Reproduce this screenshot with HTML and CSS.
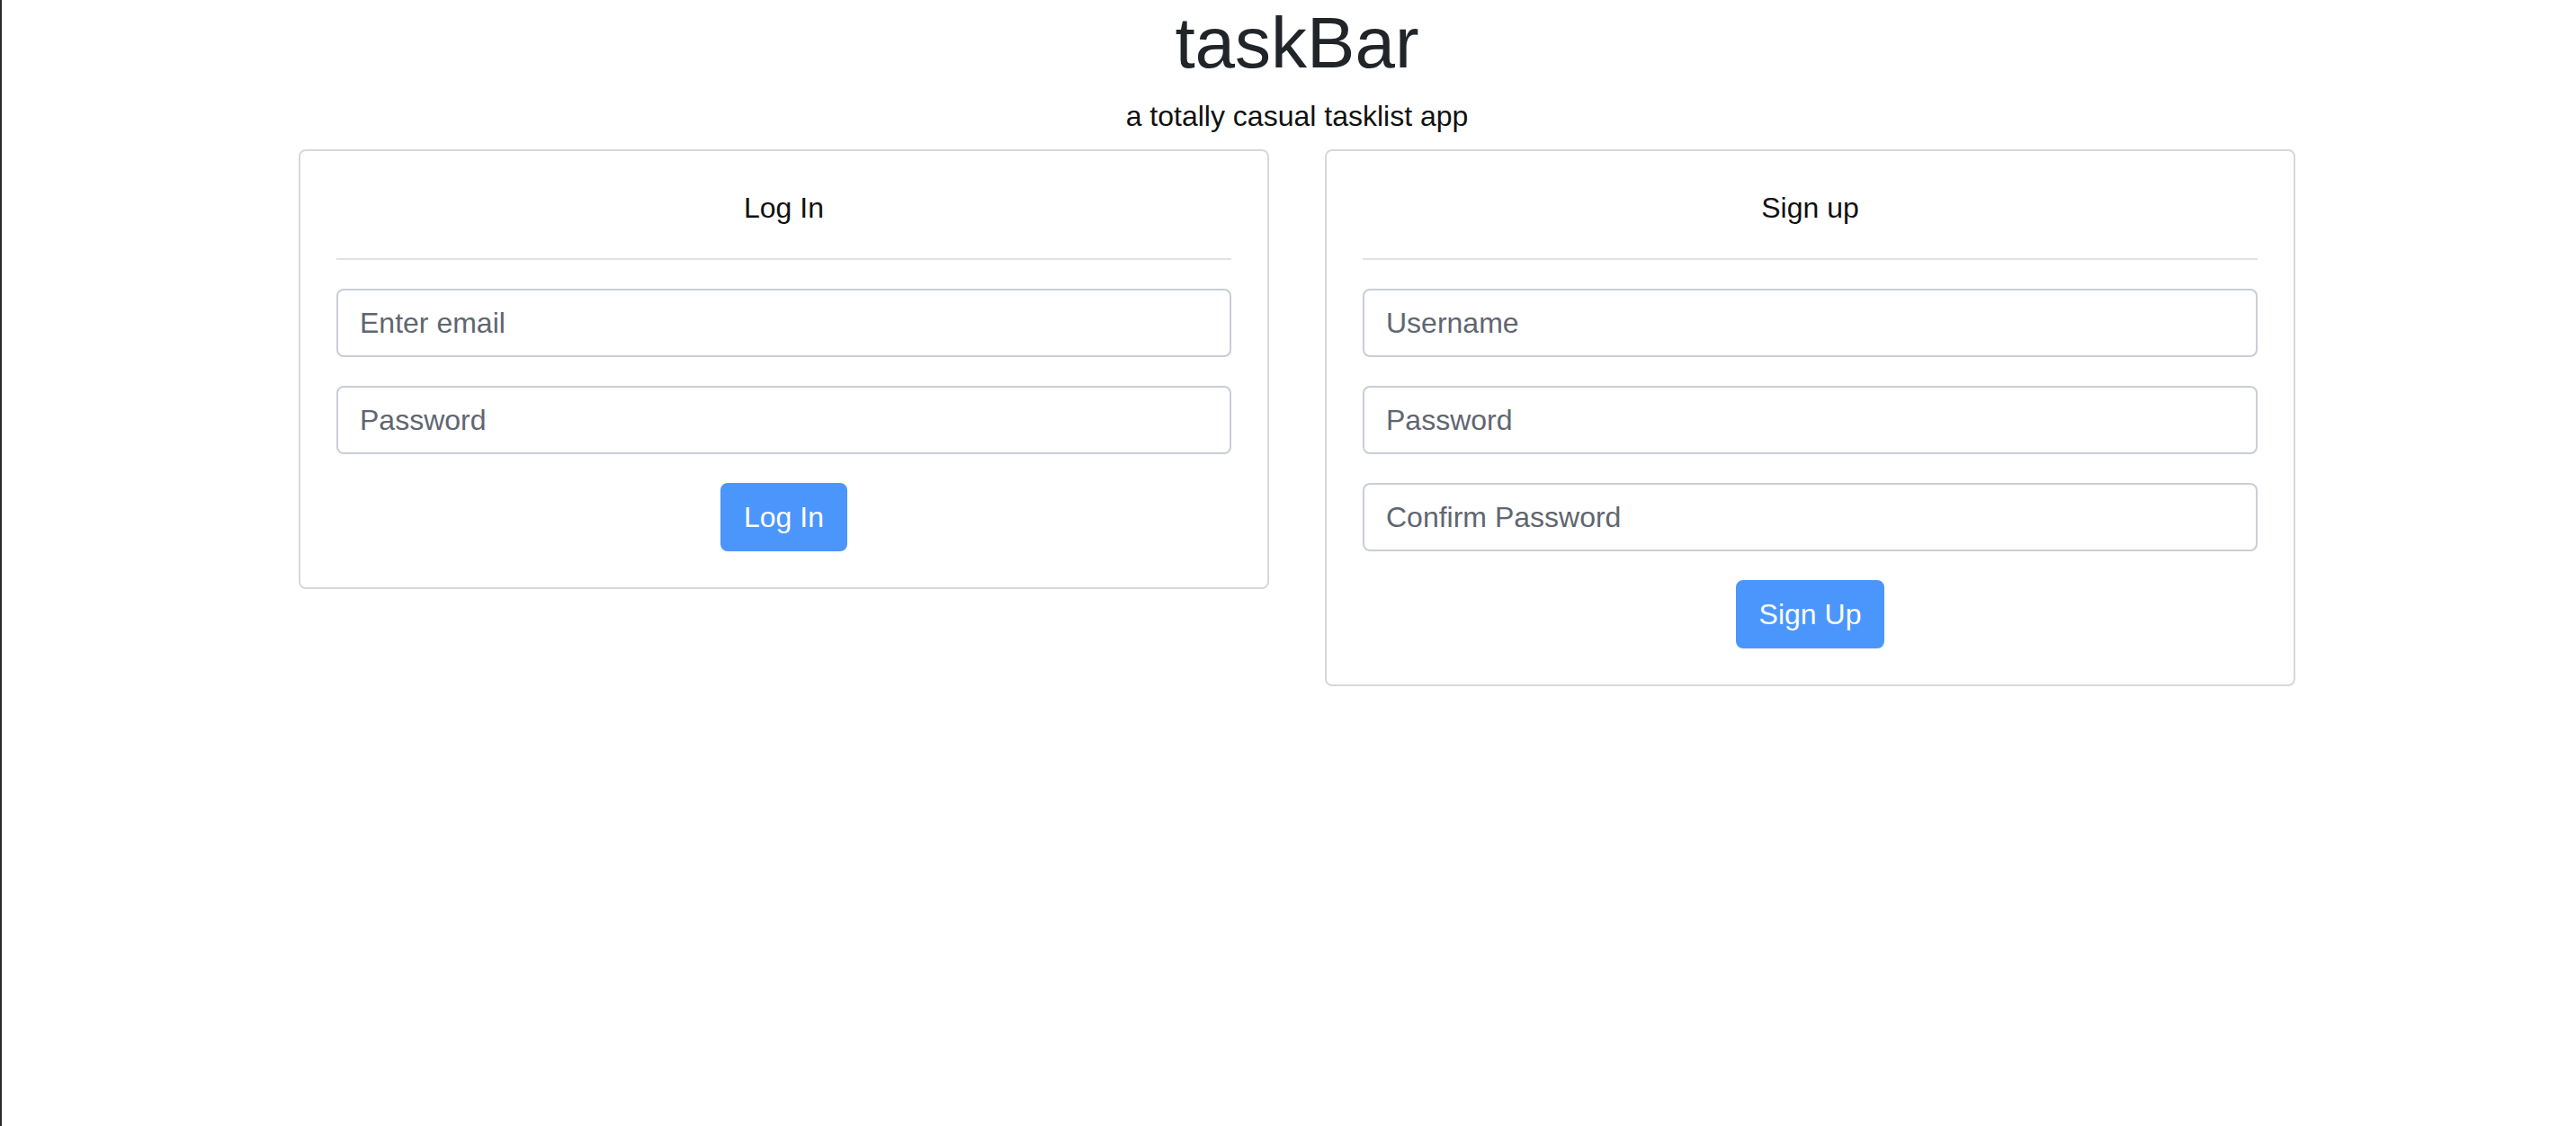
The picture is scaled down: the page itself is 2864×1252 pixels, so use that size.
FILE: index.html
```html
<!DOCTYPE html>
<html lang="en">
<head>
<meta charset="utf-8">
<title>taskBar</title>
<link rel="stylesheet" href="styles.css">
</head>
<body>
<div class="page">
  <div class="container">
    <header class="masthead">
      <h1 class="brand">taskBar</h1>
      <p class="tagline">a totally casual tasklist app</p>
    </header>
    <div class="cards">
      <section class="card">
        <h2 class="card-title">Log In</h2>
        <hr class="divider">
        <form class="form">
          <input class="field" type="email" placeholder="Enter email">
          <input class="field" type="password" placeholder="Password">
          <div class="actions"><button class="btn" type="button">Log In</button></div>
        </form>
      </section>
      <section class="card">
        <h2 class="card-title">Sign up</h2>
        <hr class="divider">
        <form class="form">
          <input class="field" type="text" placeholder="Username">
          <input class="field" type="password" placeholder="Password">
          <input class="field" type="password" placeholder="Confirm Password">
          <div class="actions"><button class="btn" type="button">Sign Up</button></div>
        </form>
      </section>
    </div>
  </div>
</div>
</body>
</html>
```
FILE: styles.css
```css
* { box-sizing: border-box; }
html, body { margin: 0; padding: 0; background: #fff; }
body {
  font-family: "Liberation Sans", Arial, Helvetica, sans-serif;
  color: #212529;
}
.page {
  min-height: 100vh;
  border-left: 2px solid #2b2b2b;
  padding-left: 18px;
}
.container {
  width: 2220px;
  margin: 0 auto;
}
.masthead { text-align: center; }
.brand {
  margin: 0 0 9px;
  font-size: 80px;
  font-weight: 400;
  line-height: 96px;
  color: #212529;
}
.tagline {
  margin: 0 0 13px;
  font-size: 32px;
  line-height: 48px;
  color: #111;
}
.cards {
  display: flex;
  gap: 62px;
  align-items: flex-start;
}
.card {
  flex: 0 0 1079px;
  border: 2px solid #d8d8d8;
  border-radius: 8px;
  padding: 39px 40px 40px;
  background: #fff;
}
.card-title {
  margin: 0;
  font-size: 32px;
  font-weight: 400;
  line-height: 48px;
  text-align: center;
  color: #111;
}
.divider {
  margin: 32px 0;
  border: 0;
  border-top: 2px solid #e2e2e2;
  height: 0;
}
.form {
  display: flex;
  flex-direction: column;
  gap: 32px;
}
.field {
  display: block;
  width: 100%;
  height: 76px;
  padding: 12px 24px;
  font-family: inherit;
  font-size: 32px;
  line-height: 48px;
  color: #495057;
  background: #fff;
  border: 2px solid #c9ced6;
  border-radius: 8px;
  outline: none;
}
.field::placeholder { color: #5f6670; opacity: 1; }
.actions { text-align: center; }
.btn {
  display: inline-block;
  height: 76px;
  padding: 12px 24px;
  font-family: inherit;
  font-size: 32px;
  line-height: 48px;
  color: #fff;
  background: #4b96fc;
  border: 2px solid #4b96fc;
  border-radius: 8px;
  cursor: pointer;
}
```
